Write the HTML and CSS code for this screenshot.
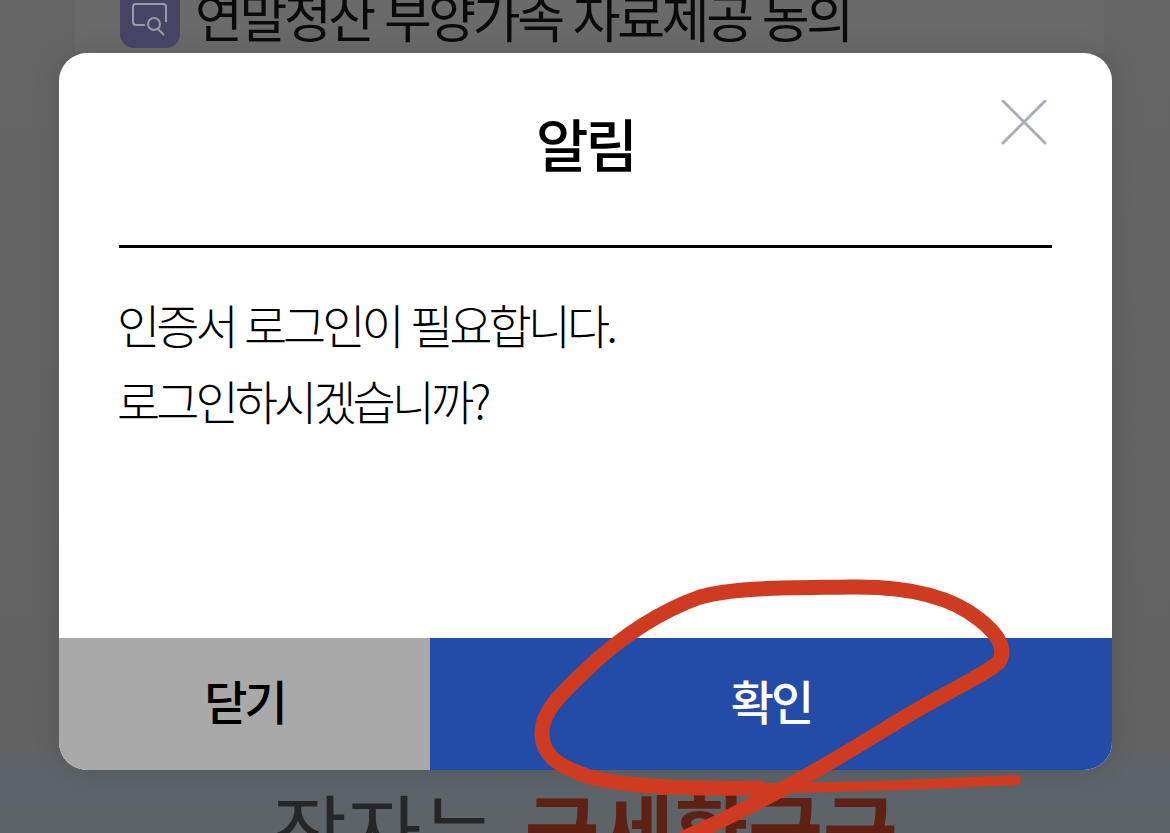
FILE: index.html
```html
<!DOCTYPE html>
<html lang="ko">
<head>
  <meta charset="UTF-8" />
  <meta name="viewport" content="width=device-width, initial-scale=1.0"/>
  <title>알림</title>
  <link rel="stylesheet" href="styles.css">
</head>
<body>

  <div class="topBand">
    <div class="menuIcon">
      <svg width="60" height="60" viewBox="0 0 60 60" fill="none" stroke="#9c9aa8" stroke-width="2">
        <path d="M25 37h-9a3 3 0 0 1-3-3V19a3 3 0 0 1 3-3h27a3 3 0 0 1 3 3v15"/>
        <circle cx="34" cy="36" r="6"/>
        <path d="M38 41l6 6"/>
      </svg>
    </div>
    <div class="menuText">연말정산 부양가족 자료제공 동의</div>
  </div>

  <div class="dialog">
    <div class="dialogHead">
      <h1 class="dialogTitle">알림</h1>
      <button class="closeBtn" aria-label="닫기">
        <svg width="48" height="48" viewBox="0 0 48 48" stroke="#a9adb8" stroke-width="3" stroke-linecap="round">
          <path d="M3 3l42 42M45 3L3 45"/>
        </svg>
      </button>
    </div>
    <div class="dialogBody">
      <p>인증서 로그인이 필요합니다.</p>
      <p>로그인하시겠습니까?</p>
    </div>
    <div class="dialogBtns">
      <button class="btn btnClose">닫기</button>
      <button class="btn btnOk">확인</button>
    </div>
  </div>

  <div class="bottomText">잠자는 <span class="bottomRed">국세환급금</span></div>

  <svg class="scribble" width="1170" height="833" viewBox="0 0 1170 833" fill="none" stroke="#cf3b20" stroke-linecap="round" stroke-linejoin="round">
    <path stroke-width="10" d="M1016 780C930 784 850 788 760 788"/>
    <path stroke-width="15" d="M760 788C700 789 630 788 590 777C560 767 543 757 542 735C541 712 560 695 588 668C618 640 655 613 700 597C735 587 790 588 850 587C905 586 950 595 980 620C1000 636 1006 650 999 662C985 675 950 690 905 717C860 744 790 790 680 840"/>
  </svg>

</body>
</html>
```

FILE: styles.css
```css
html {
  height: 833px;
  overflow: hidden;
}

body {
  margin: 0;
  height: 833px;
  overflow: hidden;
  font-family: "Noto Sans CJK KR", "Noto Sans", sans-serif;
  color: #000;
  background: linear-gradient(#656566 0, #626263 745px, #5c646a 775px, #5d6367 100%);
}

.topBand {
  display: flex;
  align-items: flex-end;
  gap: 15px;
  height: 53px;
  margin: 0 66px 0 75px;
  padding: 0 0 5px 45px;
  box-sizing: border-box;
  background: #6a6a6a;
  overflow: hidden;
}

.menuIcon {
  flex: none;
  width: 60px;
  height: 60px;
  border-radius: 14px;
  background: #464364;
}

.menuText {
  flex: none;
  font-size: 52px;
  line-height: 60px;
  letter-spacing: -3.4px;
  color: #0a0a0a;
  margin-bottom: 2px;
}

.dialog {
  display: flex;
  flex-direction: column;
  width: 1053px;
  height: 717px;
  margin-left: 59px;
  border-radius: 28px;
  background: #fff;
  overflow: hidden;
  box-shadow: 0 0 28px rgba(0, 0, 0, 0.12);
}

.dialogHead {
  position: relative;
  height: 192px;
  margin: 0 60px;
  border-bottom: 3px solid #000;
  text-align: center;
}

.dialogTitle {
  margin: 0;
  padding-top: 51px;
  font-size: 57px;
  line-height: 76px;
  font-weight: 500;
  letter-spacing: -3px;
}

.closeBtn {
  position: absolute;
  top: 45px;
  right: 4px;
  padding: 0;
  border: none;
  background: none;
  line-height: 0;
}

.dialogBody {
  flex: 1;
  padding: 38px 60px 0 58px;
  font-size: 47px;
  font-weight: 300;
  line-height: 76px;
  letter-spacing: -4px;
}

.dialogBody p {
  margin: 0;
}

.dialogBtns {
  display: flex;
  height: 132px;
}

.btn {
  padding: 0 0 9px;
  border: none;
  font-family: inherit;
  font-size: 47px;
  font-weight: 500;
  letter-spacing: -3px;
}

.btnClose {
  width: 371px;
  background: #a9a9a9;
  color: #000;
}

.btnOk {
  flex: 1;
  background: #224ca7;
  color: #fff;
}

.bottomText {
  height: 63px;
  overflow: hidden;
  text-align: center;
  padding-top: 8px;
  box-sizing: border-box;
  font-size: 81px;
  line-height: 100px;
  font-weight: 400;
  color: #262626;
  white-space: nowrap;
}

.bottomRed {
  margin-left: 6px;
  color: #5f2114;
  font-weight: 700;
}

.scribble {
  position: absolute;
  top: 0;
  left: 0;
  pointer-events: none;
}
```
